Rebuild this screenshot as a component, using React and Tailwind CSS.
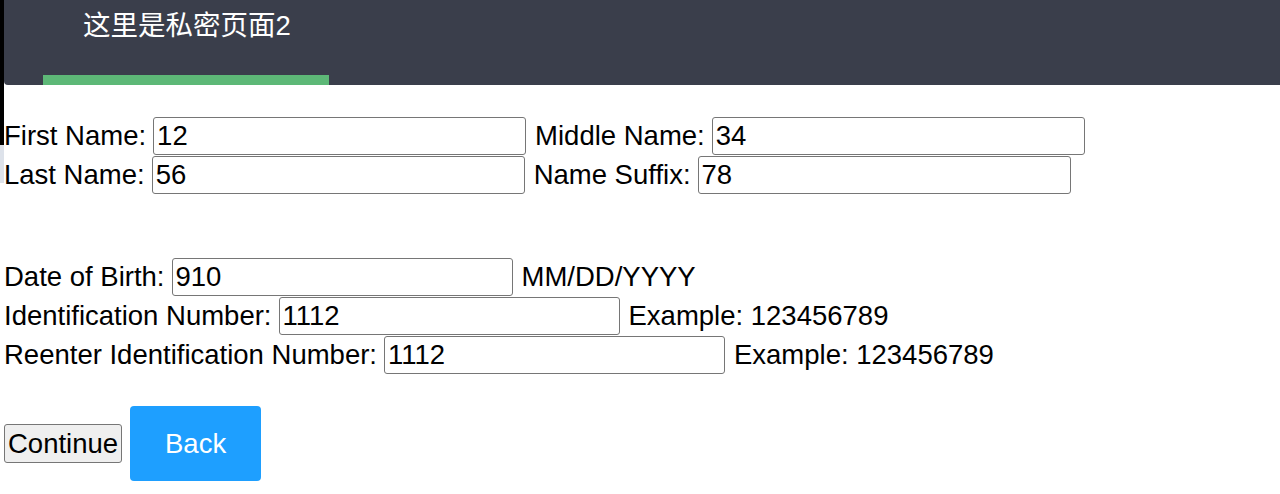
import React from "react";

const rowsTop = [
  { label: "First Name:", value: "12", label2: "Middle Name:", value2: "34" },
  { label: "Last Name:", value: "56", label2: "Name Suffix:", value2: "78" },
];

const rowsBottom = [
  { label: "Date of Birth:", value: "910", hint: "MM/DD/YYYY" },
  { label: "Identification Number:", value: "1112", hint: "Example: 123456789" },
  { label: "Reenter Identification Number:", value: "1112", hint: "Example: 123456789" },
];

const Field = ({ value, width }) => (
  <input
    type="text"
    defaultValue={value}
    className={`${width} h-[38px] border border-[#767676] rounded-[3px] px-[3px] text-[27.5px] text-black bg-white outline-none`}
  />
);

export default function App() {
  return (
    <div className="flex min-h-[494px] bg-white text-black font-['Liberation_Sans',Arial,sans-serif]">
      <div className="w-[4px] flex flex-col">
        <div className="h-[145px] bg-black" />
        <div className="h-[38px] bg-[#dde2ea]" />
      </div>

      <div className="flex-1">
        <div className="h-[85px] bg-[#3a3e4b] rounded-bl-[4px] flex flex-col justify-between">
          <div className="pl-[79px] pt-[12px] text-[27.5px] leading-[28px] text-white font-['Liberation_Sans','Noto_Sans_CJK_SC',sans-serif]">
            这里是私密页面2
          </div>
          <div className="ml-[39px] w-[286px] h-[10px] bg-[#5db877]" />
        </div>

        <div className="mt-[31px] text-[27.5px] leading-[31px]">
          {rowsTop.map((r) => (
            <div key={r.label} className="flex items-center gap-[7px] h-[39px]">
              <span>{r.label}</span>
              <Field value={r.value} width="w-[373px]" />
              <span className="ml-[2px]">{r.label2}</span>
              <Field value={r.value2} width="w-[373px]" />
            </div>
          ))}
        </div>

        <div className="mt-[63px] text-[27.5px] leading-[31px]">
          {rowsBottom.map((r) => (
            <div key={r.label} className="flex items-center gap-[7px] h-[39px]">
              <span>{r.label}</span>
              <Field value={r.value} width="w-[341px]" />
              <span className="ml-[2px]">{r.hint}</span>
            </div>
          ))}
        </div>

        <div className="mt-[32px] flex items-center gap-[8px]">
          <button className="h-[39px] px-[3px] text-[27.5px] leading-[31px] bg-[#efefef] border border-[#767676] rounded-[3px]">
            Continue
          </button>
          <button className="h-[75px] w-[131px] text-[27.5px] leading-[31px] text-white bg-[#1e9fff] rounded-[4px]">
            Back
          </button>
        </div>
      </div>
    </div>
  );
}
